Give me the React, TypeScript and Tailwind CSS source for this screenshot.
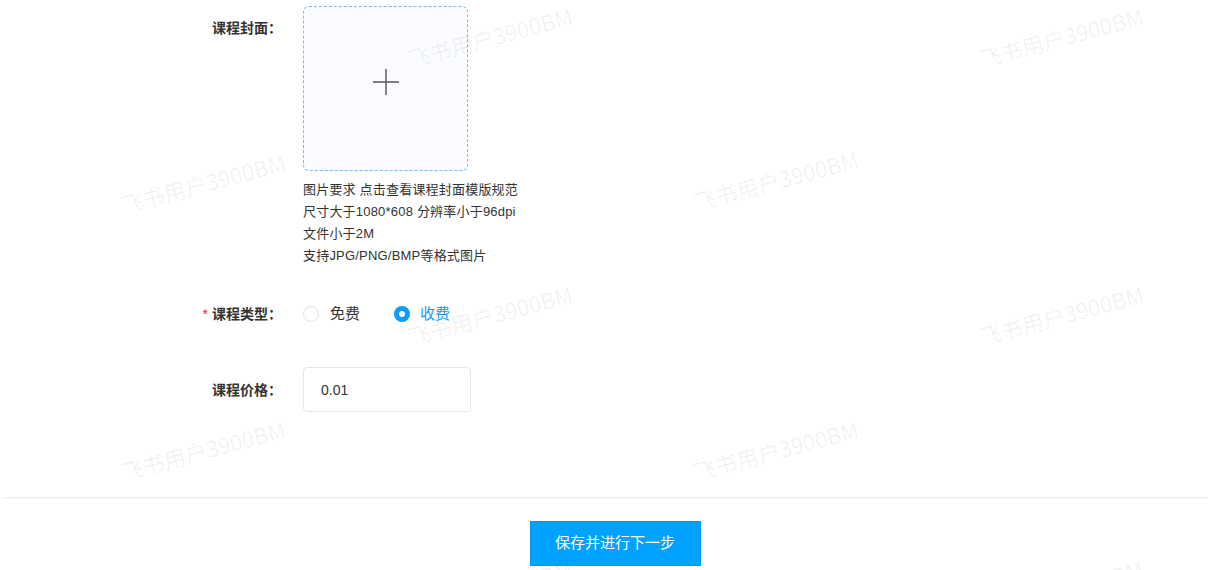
const font = { fontFamily: '"Liberation Sans", "Noto Sans CJK SC", sans-serif' };

const marks = [
  { x: 490, y: 37 },
  { x: 1061, y: 37 },
  { x: 203, y: 183 },
  { x: 776, y: 180 },
  { x: 490, y: 315 },
  { x: 1061, y: 315 },
  { x: 203, y: 450 },
  { x: 776, y: 450 },
  { x: 490, y: 590 },
  { x: 1061, y: 590 },
];

const Label = ({ text, required }: { text: string; required?: boolean }) => (
  <div className="w-[282px] shrink-0 text-right text-[14px] font-bold text-[#333] leading-[20px]">
    {required && <span className="text-[#f5222d] font-normal mr-[4px]">*</span>}
    {text}：
  </div>
);

const App = () => {
  return (
    <div className="relative w-full h-[570px] overflow-hidden bg-white text-[#333]" style={font}>
      <div className="pt-[6px]">
        {/* 课程封面 */}
        <div className="flex">
          <div className="pt-[12px]">
            <Label text="课程封面" />
          </div>
          <div className="ml-[21px]">
            <div className="w-[165px] h-[165px] rounded-[6px] border border-dashed border-[#66c2ff] bg-[#fafcff] flex items-center justify-center pb-[13px] cursor-pointer">
              <svg width="28" height="28" viewBox="0 0 28 28">
                <path d="M14 1v26M1 14h26" stroke="#555" strokeWidth="1.4" fill="none" />
              </svg>
            </div>
            <div className="mt-[8px] text-[13px] tracking-[0.2px] leading-[22px] text-[#333]">
              <div>图片要求 点击查看课程封面模版规范</div>
              <div>尺寸大于1080*608 分辨率小于96dpi</div>
              <div>文件小于2M</div>
              <div>支持JPG/PNG/BMP等格式图片</div>
            </div>
          </div>
        </div>

        {/* 课程类型 */}
        <div className="flex items-center mt-[37px] h-[20px]">
          <Label text="课程类型" required />
          <div className="ml-[21px] flex items-center text-[15px]">
            <label className="flex items-center cursor-pointer">
              <span className="w-[16px] h-[16px] rounded-full border border-[#dcdfe6] bg-white" />
              <span className="ml-[11px] text-[#333]">免费</span>
            </label>
            <label className="flex items-center ml-[34px] cursor-pointer">
              <span className="w-[16px] h-[16px] rounded-full bg-[#0a9dff] flex items-center justify-center">
                <span className="w-[6px] h-[6px] rounded-full bg-white" />
              </span>
              <span className="ml-[10px] text-[#0a9dff]">收费</span>
            </label>
          </div>
        </div>

        {/* 课程价格 */}
        <div className="flex items-center mt-[43px]">
          <Label text="课程价格" />
          <div className="ml-[21px]">
            <input
              defaultValue="0.01"
              className="w-[168px] h-[45px] rounded-[4px] border border-[#e4e6eb] px-[17px] text-[14px] text-[#333] outline-none"
            />
          </div>
        </div>
      </div>

      {/* footer */}
      <div className="absolute left-[3px] right-0 top-[497px] border-t border-[#ececec] shadow-[0_1px_1px_rgba(0,0,0,0.03)]" />
      <div className="absolute left-0 right-0 top-[521px] flex justify-center">
        <button className="w-[171px] h-[45px] bg-[#00a2ff] border border-[#0096ef] text-white text-[15px] ml-[22px]">
          保存并进行下一步
        </button>
      </div>

      {/* watermark */}
      <div className="absolute inset-0 pointer-events-none">
        {marks.map((m, i) => (
          <div
            key={i}
            className="absolute whitespace-nowrap text-[22px] text-[rgba(0,0,0,0.06)] -translate-x-1/2 -translate-y-1/2 -rotate-[15deg]"
            style={{ left: m.x, top: m.y, fontFamily: '"Noto Sans CJK SC", sans-serif' }}
          >
            飞书用户3900BM
          </div>
        ))}
      </div>
    </div>
  );
};

export default App;
